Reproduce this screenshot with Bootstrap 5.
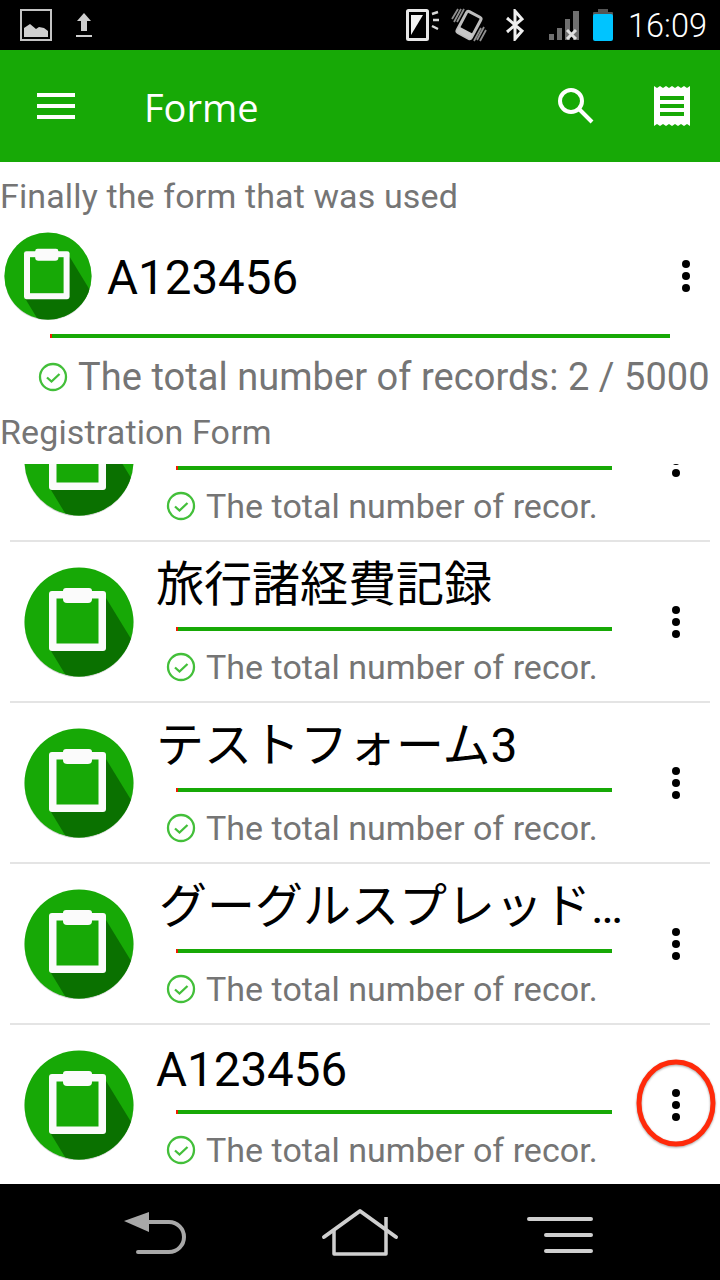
<!DOCTYPE html>
<html lang="en">
<head>
<meta charset="utf-8">
<title>Forme</title>
<link href="https://cdn.jsdelivr.net/npm/bootstrap@5.3.0/dist/css/bootstrap.min.css" rel="stylesheet">
<style>
html,body{margin:0;background:#fff}
body{font-family:Roboto,"Noto Sans CJK JP",sans-serif;width:720px}
.screen{width:720px;height:1280px;overflow:hidden}
.status-strip{height:50px;background:#000;flex:none}
.status-left{padding-left:20px;gap:24px}
.status-right{padding-right:13px}
.st-bright{margin-right:11px}
.st-vib{margin-right:18px}
.st-bt{margin-right:24px}
.st-sig{margin-right:14px}
.clock{color:#fff;font-size:32.500px;line-height:50px;margin-left:15px;padding-top:2px;font-weight:300}
.app-strip{height:112px;background:#17a906;flex:none;padding:0}
.menu-lines{width:38px;margin-left:37px;gap:7px}
.menu-lines i{display:block;height:4px;background:#fff}
.app-title{color:#fff;font-size:38px;line-height:1;margin:1px 0 0 69px;padding:0;font-family:"Open Sans",sans-serif}
.search-ic{margin-right:60px}
.receipt-ic{margin-right:30px}
.sec-label{color:#757575;font-size:34px;line-height:40px;letter-spacing:.13px;margin:0}
.first-label{margin-top:14px}
.recent-row{padding-left:4px;margin-top:16px;height:88px}
.recent-title{font-size:47.500px;line-height:60px;color:#000;margin-left:15px;margin-top:4px}
.dots{display:flex;flex-direction:column;gap:4px}
.dots i{display:block;width:8px;height:8px;border-radius:50%;background:#000}
.recent-row .dots{margin-right:30px}
.prog{height:4px;border-radius:0;background:#17a906}
.prog .progress-bar{background:#f21c00;min-width:2px}
.recent-bar{margin:14px 50px 0}
.recent-sub{margin:19px 0 0 38px;height:40px}
.sub-text{color:#757575;line-height:40px}
.recent-sub .sub-text{font-size:38px;letter-spacing:.05px;margin-left:10px;white-space:nowrap}
.reg-label{margin-top:15px;margin-bottom:12px}
.form-list{flex:1 1 0;overflow:hidden;min-height:0}
.form-list .list-group{margin-top:-83px;border-radius:0}
.form-item{height:161px;margin:0 10px;padding:0;border:0;border-bottom:2px solid #e4e4e4;border-radius:0;background:#fff;position:relative}
.form-ic{margin-left:14px;flex:none}
.form-main{width:472px;margin-left:22px;flex:none;align-self:flex-start}
.form-title{font-size:48px;line-height:60px;color:#000;padding-top:13px;height:85px;white-space:nowrap}
.latin-title{font-size:47.500px;padding-top:15px}
.indent-title{padding-left:3px}
.form-bar{margin:0 16px 0 20px}
.form-sub{margin:16px 0 0 10px;height:40px}
.form-sub .sub-text{font-size:34px;letter-spacing:.03px;margin-left:10px;white-space:nowrap}
.form-item .dots{margin-left:auto;margin-right:30px}
.mark-ring{position:absolute;left:625px;top:32px;pointer-events:none;filter:drop-shadow(0 1px 1px rgba(0,0,0,.35))}
.nav-strip{height:96px;background:#000;flex:none}
</style>
</head>
<body>
<svg width="0" height="0" class="d-block position-absolute">
<defs>
<clipPath id="discClip"><circle cx="55" cy="55" r="54.500"/></clipPath>
<symbol id="formIcon" viewBox="0 0 110 110">
<circle cx="55" cy="56" r="54.500" fill="#000" opacity=".18"/>
<circle cx="55" cy="55" r="54.500" fill="#17a906"/>
<polygon points="82,31 112,80 112,112 44,112 27,84" fill="#0a7100" clip-path="url(#discClip)"/>
<rect x="25" y="24" width="57" height="60" rx="3" fill="#fbfbfb"/>
<rect x="32.500" y="31.500" width="42" height="45" fill="#17a906"/>
<path d="M39 24a3 3 0 0 1 3-3h23a3 3 0 0 1 3 3v8a4 4 0 0 1-4 4H43a4 4 0 0 1-4-4z" fill="#fbfbfb"/>
</symbol>
<symbol id="okIcon" viewBox="0 0 30 30">
<circle cx="15" cy="15" r="13" fill="none" stroke="#43bf3a" stroke-width="2.300"/>
<path d="M9 15.500l4.500 4 8-7.500" fill="none" stroke="#43bf3a" stroke-width="2.300"/>
</symbol>
</defs>
</svg>
<div class="screen d-flex flex-column">
  <div class="status-strip d-flex align-items-center justify-content-between">
    <div class="status-left d-flex align-items-center">
      <svg width="32" height="32" viewBox="0 0 32 32"><rect x="1" y="1" width="30" height="30" fill="none" stroke="#c4c4c4" stroke-width="2"/><path d="M4 28V19l6-4 6 5 3-2 5 1 4 3v6z" fill="#cfcfcf"/></svg>
      <svg width="16" height="26" viewBox="0 0 16 26"><path d="M8 1l7 8h-4v10H5V9H1zM0 23h16v2H0z" fill="#cfcfcf"/></svg>
    </div>
    <div class="status-right d-flex align-items-center">
      <svg width="34" height="32" viewBox="0 0 34 32" class="st-bright"><rect x="1.500" y="1.500" width="20" height="29" rx="1" fill="none" stroke="#e8e8e8" stroke-width="3"/><path d="M5 26V6h12z" fill="#f4f4f4"/><path d="M26 5l6-2M27 11h6M26 17l6 3" stroke="#d8d8d8" stroke-width="2.500"/></svg>
      <svg width="36" height="34" viewBox="0 0 36 34" class="st-vib"><g transform="rotate(28 18 17)"><rect x="10" y="5" width="16" height="24" rx="2" fill="#000" stroke="#bdbdbd" stroke-width="3"/><rect x="10" y="23" width="16" height="6" fill="#c8c8c8"/></g><path d="M10 1L3 14M7 1L1 11M13 1L6 14M33 19l-7 13M35 22l-6 11M30 20l-7 13" stroke="#8f8f8f" stroke-width="1.800"/></svg>
      <svg width="20" height="32" viewBox="0 0 20 32" class="st-bt"><path d="M2 9l15 13-7 8V2l7 8L2 23" fill="none" stroke="#efefef" stroke-width="3"/></svg>
      <svg width="30" height="30" viewBox="0 0 30 30" class="st-sig"><path d="M0 24h5v6H0zM8 18h5v12H8zM16 9h5v21h-5zM24 1h6v29h-6z" fill="#6f6f6f"/><path d="M18 20l9 9m0-9l-9 9" stroke="#e0e0e0" stroke-width="3"/></svg>
      <svg width="20" height="32" viewBox="0 0 20 32"><rect x="5" y="0" width="10" height="4" fill="#555"/><rect x="0" y="3" width="20" height="5" rx="1" fill="#555"/><rect x="0" y="5" width="20" height="27" rx="2" fill="#00c4ff"/></svg>
      <span class="clock">16:09</span>
    </div>
  </div>
  <nav class="navbar app-strip d-flex align-items-center flex-nowrap justify-content-start">
    <div class="menu-lines d-flex flex-column"><i></i><i></i><i></i></div>
    <span class="navbar-brand app-title">Forme</span>
    <svg width="36" height="36" viewBox="0 0 36 36" class="search-ic ms-auto"><circle cx="13" cy="13" r="11" fill="none" stroke="#fff" stroke-width="4"/><path d="M21 21l13 13" stroke="#fff" stroke-width="4"/></svg>
    <svg width="36" height="40" viewBox="0 0 36 40" class="receipt-ic"><path d="M0 0l3 2 3-2 3 2 3-2 3 2 3-2 3 2 3-2 3 2 3-2 3 2 3-2v40l-3-2-3 2-3-2-3 2-3-2-3 2-3-2-3 2-3-2-3 2-3-2-3 2z" fill="#fff"/><path d="M6 10h24v4H6zM6 18h24v4H6zM6 26h24v4H6z" fill="#17a906"/></svg>
  </nav>
  <p class="sec-label first-label">Finally the form that was used</p>
  <div class="recent-row d-flex align-items-center">
    <svg width="88" height="88" class="flex-none"><use href="#formIcon"/></svg>
    <div class="recent-title flex-grow-1">A123456</div>
    <div class="dots"><i></i><i></i><i></i></div>
  </div>
  <div class="progress prog recent-bar"><div class="progress-bar"></div></div>
  <div class="recent-sub d-flex align-items-center">
    <svg width="30" height="30"><use href="#okIcon"/></svg>
    <span class="sub-text">The total number of records: 2 / 5000</span>
  </div>
  <p class="sec-label reg-label">Registration Form</p>
  <div class="form-list">
    <div class="list-group">
      <div class="list-group-item form-item d-flex align-items-center">
        <svg width="110" height="110" class="form-ic"><use href="#formIcon"/></svg>
        <div class="form-main"><div class="form-title"></div><div class="progress prog form-bar"><div class="progress-bar"></div></div><div class="form-sub d-flex align-items-center"><svg width="30" height="30"><use href="#okIcon"/></svg><span class="sub-text">The total number of recor.</span></div></div>
        <div class="dots"><i></i><i></i><i></i></div>
      </div>
      <div class="list-group-item form-item d-flex align-items-center">
        <svg width="110" height="110" class="form-ic"><use href="#formIcon"/></svg>
        <div class="form-main"><div class="form-title">旅行諸経費記録</div><div class="progress prog form-bar"><div class="progress-bar"></div></div><div class="form-sub d-flex align-items-center"><svg width="30" height="30"><use href="#okIcon"/></svg><span class="sub-text">The total number of recor.</span></div></div>
        <div class="dots"><i></i><i></i><i></i></div>
      </div>
      <div class="list-group-item form-item d-flex align-items-center">
        <svg width="110" height="110" class="form-ic"><use href="#formIcon"/></svg>
        <div class="form-main"><div class="form-title">テストフォーム3</div><div class="progress prog form-bar"><div class="progress-bar"></div></div><div class="form-sub d-flex align-items-center"><svg width="30" height="30"><use href="#okIcon"/></svg><span class="sub-text">The total number of recor.</span></div></div>
        <div class="dots"><i></i><i></i><i></i></div>
      </div>
      <div class="list-group-item form-item d-flex align-items-center">
        <svg width="110" height="110" class="form-ic"><use href="#formIcon"/></svg>
        <div class="form-main"><div class="form-title indent-title">グーグルスプレッド…</div><div class="progress prog form-bar"><div class="progress-bar"></div></div><div class="form-sub d-flex align-items-center"><svg width="30" height="30"><use href="#okIcon"/></svg><span class="sub-text">The total number of recor.</span></div></div>
        <div class="dots"><i></i><i></i><i></i></div>
      </div>
      <div class="list-group-item form-item d-flex align-items-center">
        <svg width="110" height="110" class="form-ic"><use href="#formIcon"/></svg>
        <div class="form-main"><div class="form-title latin-title">A123456</div><div class="progress prog form-bar"><div class="progress-bar"></div></div><div class="form-sub d-flex align-items-center"><svg width="30" height="30"><use href="#okIcon"/></svg><span class="sub-text">The total number of recor.</span></div></div>
        <div class="dots"><i></i><i></i><i></i></div>
        <svg class="mark-ring" width="84" height="92" viewBox="0 0 84 92"><ellipse cx="41" cy="46" rx="37" ry="41" fill="none" stroke="#ff2a0a" stroke-width="5"/></svg>
      </div>
    </div>
  </div>
  <div class="nav-strip d-flex align-items-center">
    <svg width="720" height="96" viewBox="0 0 720 96">
      <path d="M124 37l25-9v20z" fill="#a8a8a8"/><path d="M148 38h21a15 15 0 0 1 0 30h-31" fill="none" stroke="#a8a8a8" stroke-width="4" stroke-linecap="round"/>
      <path d="M324 53l36-26 36 26" fill="none" stroke="#cfcfcf" stroke-width="4" stroke-linecap="round" stroke-linejoin="round"/><path d="M334 45v25h52V33" fill="none" stroke="#cfcfcf" stroke-width="3.500" stroke-linejoin="round"/>
      <path d="M529 35h62M546 51h45M546 67h45" stroke="#cfcfcf" stroke-width="4" stroke-linecap="round"/>
    </svg>
  </div>
</div>
<script src="https://cdn.jsdelivr.net/npm/bootstrap@5.3.0/dist/js/bootstrap.bundle.min.js"></script>
</body>
</html>
